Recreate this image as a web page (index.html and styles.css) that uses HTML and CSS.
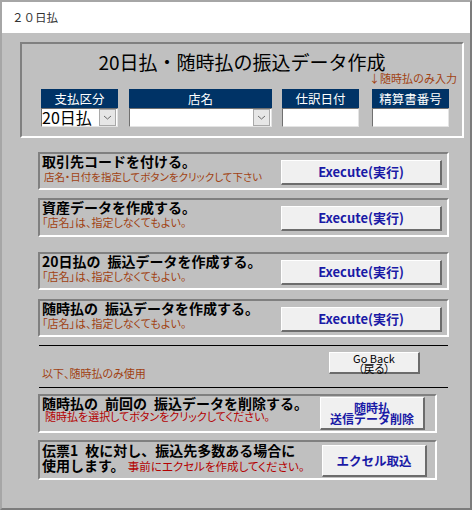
FILE: index.html
```html
<!DOCTYPE html>
<html lang="ja">
<head>
<meta charset="utf-8">
<title>２０日払</title>
<link rel="stylesheet" href="styles.css">
</head>
<body>
<div class="window">
  <div class="titlebar">２０日払</div>
  <div class="header">
    <h1 class="header-title">20日払・随時払の振込データ作成</h1>
    <div class="note">↓随時払のみ入力</div>
    <div class="fields">
      <div class="field">
        <div class="label">支払区分</div>
        <div class="input combo">
          <span class="value">20日払</span>
          <span class="drop"><svg width="15" height="15" viewBox="0 0 15 15"><polyline points="4,6 7.5,9 11,6" fill="none" stroke="#6a6a6a" stroke-width="1"/></svg></span>
        </div>
      </div>
      <div class="field shop">
        <div class="label">店名</div>
        <div class="input combo">
          <span class="value"></span>
          <span class="drop"><svg width="15" height="15" viewBox="0 0 15 15"><polyline points="4,6 7.5,9 11,6" fill="none" stroke="#6a6a6a" stroke-width="1"/></svg></span>
        </div>
      </div>
      <div class="field date">
        <div class="label">仕訳日付</div>
        <div class="input"></div>
      </div>
      <div class="field num">
        <div class="label">精算書番号</div>
        <div class="input"></div>
      </div>
    </div>
  </div>

  <div class="tasks">
    <div class="task t1">
      <div class="task-text">
        <div class="task-title">取引先コードを付ける。</div>
        <div class="task-sub brown indent">店名・日付を指定してボタンをクリックして下さい</div>
      </div>
      <button class="btn btn-exec">Execute(実行)</button>
    </div>
    <div class="task t2">
      <div class="task-text">
        <div class="task-title">資産データを作成する。</div>
        <div class="task-sub brown">「店名」は、指定しなくてもよい。</div>
      </div>
      <button class="btn btn-exec">Execute(実行)</button>
    </div>
    <div class="task t3">
      <div class="task-text">
        <div class="task-title">20日払の&ensp;振込データを作成する。</div>
        <div class="task-sub brown">「店名」は、指定しなくてもよい。</div>
      </div>
      <button class="btn btn-exec">Execute(実行)</button>
    </div>
    <div class="task t4">
      <div class="task-text">
        <div class="task-title">随時払の&ensp;振込データを作成する。</div>
        <div class="task-sub brown">「店名」は、指定しなくてもよい。</div>
      </div>
      <button class="btn btn-exec">Execute(実行)</button>
    </div>

    <div class="rule r1"></div>
    <div class="only-row">
      <span class="only-note">以下、随時払のみ使用</span>
      <button class="btn btn-back"><span class="bl">Go Back</span><span class="bl">（戻る）</span></button>
    </div>
    <div class="rule r2"></div>

    <div class="task t5">
      <div class="task-text">
        <div class="task-title tight">随時払の&ensp;前回の&ensp;振込データを削除する。</div>
        <div class="task-sub red sub5">随時払を選択してボタンをクリックしてください。</div>
      </div>
      <button class="btn btn-del"><span class="bl">随時払</span><span class="bl">送信データ削除</span></button>
    </div>
    <div class="task t6">
      <div class="task-text">
        <div class="task-title two">伝票1&ensp;枚に対し、振込先多数ある場合に<br>使用します。 <span class="red inline">事前にエクセルを作成してください。</span></div>
      </div>
      <button class="btn btn-xl">エクセル取込</button>
    </div>
  </div>
</div>
</body>
</html>
```
FILE: styles.css
```css
* {
  box-sizing: border-box;
  margin: 0;
  padding: 0;
}

body {
  margin: 0;
  background: #ffffff;
  font-family: "Noto Sans CJK JP", "Noto Sans", sans-serif;
  color: #000;
}

.window {
  width: 472px;
  height: 510px;
  border-style: solid;
  border-width: 2px;
  border-color: #a6a6a6 #7c7c7c #7c7c7c #a6a6a6;
  background: #c0c0c0;
  display: flex;
  flex-direction: column;
}

.titlebar {
  height: 31px;
  flex: none;
  background: #ffffff;
  padding-left: 10px;
  font-size: 11.5px;
  line-height: 31px;
  color: #333;
}

/* header frame */
.header {
  flex: none;
  margin: 9px 0 0 18px;
  width: 444px;
  height: 96px;
  border-style: solid;
  border-width: 2px;
  border-color: #808080 #ffffff #ffffff #808080;
  padding: 6px 5px 0 5px;
}

.header-title {
  font-size: 19px;
  font-weight: 400;
  line-height: 24px;
  text-align: center;
}

.note {
  margin-top: -2px;
  text-align: right;
  font-size: 11px;
  line-height: 13px;
  color: #a04212;
}

.fields {
  display: flex;
  margin-top: 4px;
  margin-left: 14px;
}

.field {
  display: flex;
  flex-direction: column;
  width: 77px;
}

.field.shop {
  width: 143px;
  margin-left: 11px;
}

.field.date {
  margin-left: 10px;
}

.field.num {
  margin-left: 13px;
}

.label {
  height: 19px;
  background: #003366;
  color: #ffffff;
  font-size: 12.5px;
  line-height: 19px;
  text-align: center;
}

.input {
  height: 19px;
  background: #ffffff;
  border-style: solid;
  border-width: 1px;
  border-color: #707070 #e4e4e4 #e4e4e4 #707070;
  display: flex;
  align-items: center;
}

.combo .value {
  flex: 1;
  min-width: 0;
  font-size: 16px;
  line-height: 17px;
  white-space: nowrap;
}

.drop {
  flex: none;
  width: 17px;
  height: 17px;
  margin-right: 1px;
  background: #e6e6e6;
  border: 1px solid #a9a9a9;
  display: flex;
  align-items: center;
  justify-content: center;
}

.drop svg {
  display: block;
}

/* tasks */
.tasks {
  flex: none;
  margin-left: 36px;
  width: 411px;
  display: flex;
  flex-direction: column;
}

.task {
  display: flex;
  justify-content: space-between;
  align-items: flex-start;
  border-style: solid;
  border-width: 2px;
  border-color: #808080 #ffffff #ffffff #808080;
  height: 38px;
  padding: 0 5px 0 2px;
}

.t1 { margin-top: 14px; }
.t2 { margin-top: 8px; height: 39px; }
.t3 { margin-top: 15px; }
.t4 { margin-top: 9px; }
.t5 { margin-top: 6px; width: 399px; height: 39px; padding-right: 10px; }
.t6 { margin-top: 7px; width: 399px; height: 40px; padding-right: 8px; }

.task-title {
  font-size: 14px;
  font-weight: 700;
  line-height: 15px;
  white-space: nowrap;
}

.task-title.tight {
  line-height: 14px;
}

.task-title.two {
  line-height: 15px;
  padding-top: 1px;
}

.task-sub {
  font-size: 11px;
  line-height: 15px;
  white-space: nowrap;
  font-feature-settings: "palt";
}

.task-sub.indent {
  padding-left: 2px;
  font-size: 10.5px;
}

.task-sub.sub5 {
  font-size: 11px;
  line-height: 13px;
  padding-left: 3px;
}

.brown {
  color: #a04212;
}

.red {
  color: #b40000;
}

.inline {
  font-size: 11.5px;
  font-weight: 400;
  font-feature-settings: "palt";
}

/* buttons */
.btn {
  font-family: inherit;
  background: #f0f0f0;
  border-style: solid;
  border-width: 1px 2px 2px 1px;
  border-color: #ffffff #6c6c6c #6c6c6c #ffffff;
  color: #1a1aa6;
  font-weight: 700;
  padding: 0;
  flex: none;
}

.bl {
  display: block;
}

.btn-exec {
  width: 161px;
  height: 25px;
  margin-top: 6px;
  font-size: 13px;
  line-height: 20px;
}

.btn-back {
  width: 91px;
  height: 22px;
  font-size: 11px;
  font-weight: 400;
  color: #000;
  line-height: 10px;
  font-feature-settings: "palt";
}

.btn-del {
  width: 105px;
  height: 33px;
  margin-top: 1px;
  font-size: 12px;
  line-height: 11.5px;
}

.btn-xl {
  width: 105px;
  height: 32px;
  margin-top: 3px;
  font-size: 12.5px;
  line-height: 20px;
}

.rule {
  height: 1px;
  width: 409px;
  margin-left: 1px;
  background: #000;
}

.r1 { margin-top: 8px; }
.r2 { margin-top: 13px; }

.only-row {
  margin-top: 6px;
  display: flex;
  justify-content: space-between;
  align-items: flex-end;
  padding-left: 4px;
  padding-right: 29px;
  height: 22px;
}

.only-note {
  font-size: 11px;
  line-height: 13px;
  margin-bottom: -6px;
  color: #a04212;
  font-feature-settings: "palt";
}
```
